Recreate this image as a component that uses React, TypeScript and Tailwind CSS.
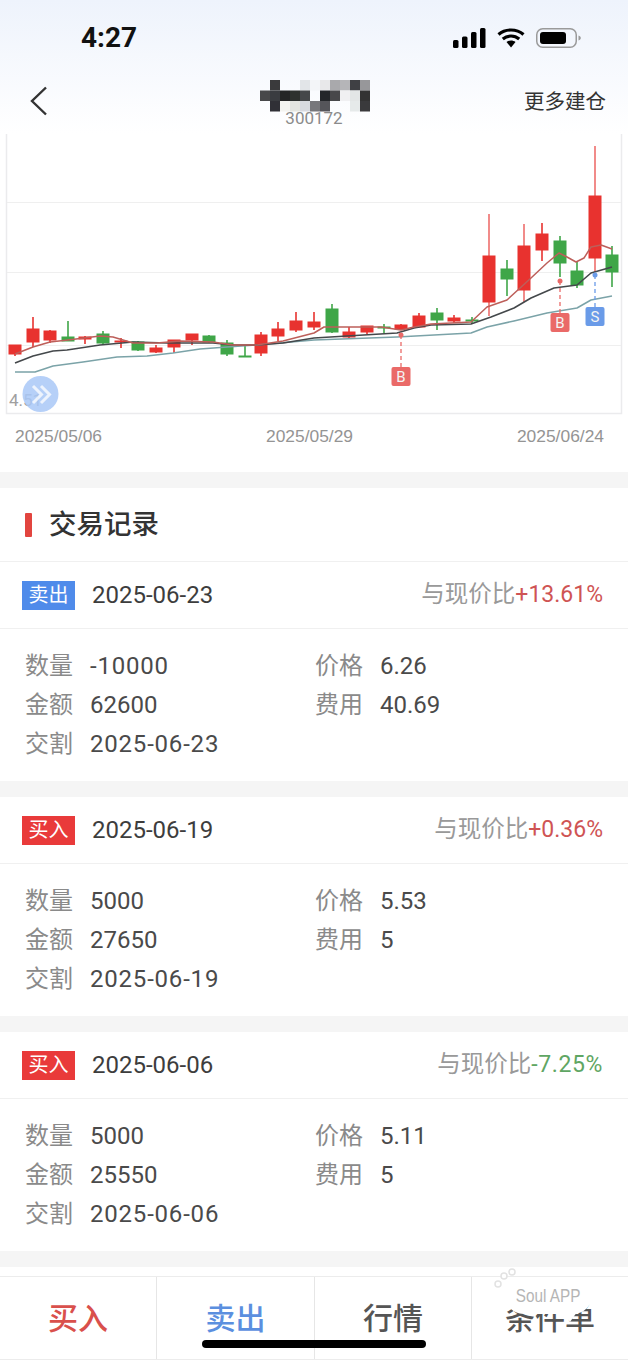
const RED = "#e8322f";
const GREEN = "#3fa648";

// x, body top, body bottom, wick top, wick bottom
const candles: [string, number, number, number, number, number][] = [
  ["r", 15, 345, 354, 345, 356],
  ["r", 33, 329, 342, 317, 347],
  ["r", 50, 331, 340, 330, 343],
  ["g", 68, 337, 341, 321, 341],
  ["r", 85, 337, 339, 336, 344],
  ["g", 103, 334, 343, 331, 345],
  ["r", 121, 341, 342, 338, 348],
  ["g", 138, 342, 350, 341, 351],
  ["r", 156, 348, 352, 345, 353],
  ["r", 174, 340, 347, 340, 353],
  ["r", 192, 334, 340, 334, 345],
  ["g", 209, 336, 342, 335, 343],
  ["g", 227, 343, 354, 340, 356],
  ["g", 245, 356, 357, 346, 357],
  ["r", 261, 335, 353, 332, 356],
  ["r", 278, 329, 336, 322, 341],
  ["r", 296, 321, 330, 312, 332],
  ["r", 314, 322, 327, 312, 330],
  ["g", 332, 309, 332, 304, 333],
  ["r", 349, 332, 337, 327, 338],
  ["r", 367, 326, 332, 326, 334],
  ["g", 384, 327, 328, 324, 333],
  ["r", 401, 325, 329, 324, 330],
  ["r", 419, 316, 327, 313, 327],
  ["g", 437, 313, 320, 308, 330],
  ["r", 454, 318, 321, 315, 323],
  ["g", 472, 320, 321, 317, 324],
  ["r", 489, 256, 302, 214, 316],
  ["g", 507, 269, 279, 260, 296],
  ["r", 524, 246, 290, 224, 302],
  ["r", 542, 234, 250, 223, 261],
  ["g", 560, 241, 263, 236, 277],
  ["g", 577, 271, 285, 262, 288],
  ["r", 595, 196, 258, 146, 272],
  ["g", 612, 255, 272, 246, 287],
];

const maRed = "15,354 33,347 50,342 68,340 100,336 113,337 133,343 157,343 180,341 213,342 233,345 257,345 283,341 314,333 324,327 357,327 381,327 401,330 414,327 431,324 471,322 487,307 507,300 531,278 547,263 559,253 567,257 576,262 584,258 591,247 601,245 612,249";
const maBlack = "15,363 33,356 53,351 67,350 100,345 133,342 167,343 213,343 233,345 257,345 283,343 314,338 347,336 397,333 414,328 431,325 471,324 491,317 514,308 531,298 554,288 577,285 591,273 612,267";
const maTeal = "15,372 35,372 53,366 83,362 117,357 147,356 173,353 200,349 227,347 257,345 314,340 397,337 471,333 487,327 514,321 547,313 577,308 591,300 612,296";

function TradeMark({ x, y1, y2, label, color }: { x: number; y1: number; y2: number; label: string; color: string }) {
  return (
    <g>
      <circle cx={x} cy={y1} r="2.5" fill={color} />
      <line x1={x} x2={x} y1={y1} y2={y2} stroke={color} strokeWidth="1.3" strokeDasharray="4 3" />
      <rect x={x - 9.5} y={y2} width="19" height="19" rx="2" fill={color} />
      <text x={x} y={y2 + 15} textAnchor="middle" fontSize="15" fill="#f4f4f4" fontFamily="Roboto, sans-serif">
        {label}
      </text>
    </g>
  );
}

function KChart() {
  return (
    <svg width="628" height="285" viewBox="0 133 628 285" className="block">
      <path d="M6.5 134V413.5H621.5V134" fill="none" stroke="#ebebed" strokeWidth="1.5" />
      <path d="M7 202.5H621M7 272.5H621M7 345.5H621" stroke="#efefef" strokeWidth="1" />
      {candles.map(([c, x, top, bottom, wickTop, wickBottom]) => (
        <g key={x} fill={c === "r" ? RED : GREEN} stroke={c === "r" ? RED : GREEN}>
          <line x1={x} x2={x} y1={wickTop} y2={wickBottom} strokeWidth="1.6" opacity={x === 595 || x === 489 || x === 524 ? 0.7 : 1} />
          <rect x={x - 6} y={top} width="12" height={bottom - top} strokeWidth="1" />
        </g>
      ))}
      <polyline points={maTeal} fill="none" stroke="#7ba3a8" strokeWidth="1.5" strokeLinejoin="round" />
      <polyline points={maBlack} fill="none" stroke="#44484b" strokeWidth="1.6" strokeLinejoin="round" />
      <polyline points={maRed} fill="none" stroke="#bd5f5a" strokeWidth="1.5" strokeLinejoin="round" />
      <TradeMark x={401} y1={335} y2={367} label="B" color="#ea6a68" />
      <TradeMark x={560} y1={281} y2={313} label="B" color="#ea6a68" />
      <TradeMark x={595} y1={275} y2={307} label="S" color="#6a9be8" />
      <text x="9" y="406" fontSize="17" fill="#a0a0a0" fontFamily="Roboto, sans-serif">4.51</text>
      <circle cx="40.5" cy="394" r="18" fill="#a9c8f7" fillOpacity="0.85" />
      <path d="M33 386L41.5 394.5L33 403M41 386L49.5 394.5L41 403" fill="none" stroke="#ffffff" strokeWidth="3" opacity="0.75" />
    </svg>
  );
}

function StatusIcons() {
  return (
    <div className="flex items-center">
      <svg width="33" height="20" viewBox="0 0 33 20">
        <rect x="0" y="12" width="5.5" height="8" rx="1.5" fill="#000" />
        <rect x="9" y="8.5" width="5.5" height="11.5" rx="1.5" fill="#000" />
        <rect x="18" y="4" width="5.5" height="16" rx="1.5" fill="#000" />
        <rect x="27" y="0" width="5.5" height="20" rx="1.5" fill="#000" />
      </svg>
      <svg width="28" height="20" viewBox="0 0 28 20" className="ml-[11px]">
        <path d="M1.5 6.5C8.5 0.5 19.5 0.5 26.5 6.5M5.8 11C10.5 7 17.5 7 22.2 11" fill="none" stroke="#000" strokeWidth="3.2" />
        <path d="M9.5 14C12 12 16 12 18.5 14L14 19.5Z" fill="#000" />
      </svg>
      <svg width="45" height="20" viewBox="0 0 45 20" className="ml-[11px]">
        <rect x="0.75" y="0.75" width="39.5" height="18.5" rx="6" fill="none" stroke="#9a9a9a" strokeWidth="1.5" />
        <rect x="4" y="4" width="26" height="12" rx="3" fill="#000" />
        <path d="M42.5 7.5V12.5C44 12 44.8 11 44.8 10S44 8 42.5 7.5Z" fill="#9a9a9a" />
      </svg>
    </div>
  );
}

// pixelated title
const mosaic: [number, number, string][] = [
  [270, 80, "#3a3a3c"], [300, 80, "#e2e5e8"], [310, 80, "#f3f5f8"], [320, 80, "#e8e8ea"], [330, 80, "#a9a9ac"], [340, 80, "#b5b5b8"], [350, 80, "#3f4044"], [360, 80, "#97979a"],
  [260, 90.5, "#48484a"], [270, 90.5, "#3a3c40"], [280, 90.5, "#252525"], [290, 90.5, "#2e322e"], [300, 90.5, "#45474a"], [320, 90.5, "#24262a"], [330, 90.5, "#48484a"], [340, 90.5, "#f0f0f2"], [350, 90.5, "#e3e6e6"], [360, 90.5, "#333333"],
  [270, 101, "#303036"], [280, 101, "#f4f4f0"], [290, 101, "#e4e6e0"], [300, 101, "#d8dae0"], [310, 101, "#77777b"], [320, 101, "#55555a"], [350, 101, "#e6eaea"], [360, 101, "#3a3a3c"],
];

const trades = [
  { side: "卖出", date: "2025-06-23", diff: "+13.61%", qty: "-10000", price: "6.26", amount: "62600", fee: "40.69" },
  { side: "买入", date: "2025-06-19", diff: "+0.36%", qty: "5000", price: "5.53", amount: "27650", fee: "5" },
  { side: "买入", date: "2025-06-06", diff: "-7.25%", qty: "5000", price: "5.11", amount: "25550", fee: "5" },
];

function Field({ label, value }: { label: string; value: string }) {
  return (
    <div className="flex h-[39px] items-center">
      <span className="w-[65px] text-[#8a8a8a]">{label}</span>
      <span className={value.includes("-") ? "tracking-[0.8px] text-[#4a4a4a]" : "text-[#4a4a4a]"}>{value}</span>
    </div>
  );
}

function TradeCard({ side, date, diff, qty, price, amount, fee }: (typeof trades)[number]) {
  const isSell = side === "卖出";
  return (
    <section>
      <div className="flex h-[67px] items-center justify-between border-b border-[#f0f0f0] pl-[22px] pr-[25px]">
        <div className="flex items-center">
          <span className={`flex h-[29px] w-[53px] items-center justify-center text-[20px] text-white ${isSell ? "bg-[#4f8bea]" : "bg-[#e93a3a]"}`}>
            {side}
          </span>
          <span className="ml-[17px] text-[24px] text-[#3d3d3d]">{date}</span>
        </div>
        <div className="text-[23.5px] text-[#999999]">
          与现价比
          <span className={diff.startsWith("-") ? "text-[23px] tracking-[0.6px] text-[#5fa663]" : "text-[23px] text-[#cf5454]"}>{diff}</span>
        </div>
      </div>
      <div className="grid h-[152px] grid-cols-[290px_1fr] content-start pl-[25px] pt-[17px] text-[24px]">
        <Field label="数量" value={qty} />
        <Field label="价格" value={price} />
        <Field label="金额" value={amount} />
        <Field label="费用" value={fee} />
        <Field label="交割" value={date} />
      </div>
    </section>
  );
}

export default function App() {
  return (
    <div
      className="relative flex h-[1360px] w-[628px] flex-col overflow-hidden bg-white"
      style={{ fontFamily: 'Roboto, "Noto Sans CJK SC", sans-serif' }}
    >
      <header className="h-[133px] bg-gradient-to-b from-[#eef3fc] to-white">
        <div className="flex h-[76px] items-center justify-between pl-[81px] pr-[47px]">
          <span className="text-[28px] font-bold text-[#111]">4:27</span>
          <StatusIcons />
        </div>
        <div className="relative flex h-[50px] items-center justify-between pl-[30px] pr-[22px]">
          <svg width="18" height="30" viewBox="0 0 18 30">
            <path d="M16 1.5L2 15L16 28.5" fill="none" stroke="#333" strokeWidth="2.4" />
          </svg>
          <span className="pt-[2px] text-[20.5px] text-[#333]">更多建仓</span>
        </div>
        <p className="-mt-[18px] text-center text-[17px] leading-[20px] text-[#8b8b8b]">300172</p>
      </header>

      {/* mosaic over the stock name */}
      <svg width="628" height="32" viewBox="0 80 628 32" className="absolute left-0 top-[80px]">
        {mosaic.map(([x, y, fill]) => (
          <rect key={`${x}-${y}`} x={x} y={y} width="10" height="10.5" fill={fill} />
        ))}
      </svg>

      <KChart />
      <div className="flex h-[54px] justify-between pl-[15px] pr-[24px] pt-[6px] text-[17.4px] leading-[24px] text-[#949494]" style={{ fontFamily: '"Liberation Sans", sans-serif' }}>
        <span>2025/05/06</span>
        <span>2025/05/29</span>
        <span>2025/06/24</span>
      </div>

      <div className="h-[16px] bg-[#f5f5f5]" />
      <div className="flex h-[74px] items-center border-b border-[#f0f0f0] pl-[25px]">
        <span className="h-[24px] w-[7px] rounded-[1px] bg-[#e2453f]" />
        <span className="ml-[17px] text-[27.5px] font-medium text-[#333]">交易记录</span>
      </div>

      <div>
        {trades.map((t) => (
          <div key={t.date}>
            <TradeCard {...t} />
            <div className="h-[16px] bg-[#f5f5f5]" />
          </div>
        ))}
      </div>

      <div className="mt-auto grid h-[84px] grid-cols-[156px_158px_157px_157px] border-y border-[#ececec] text-[30px] font-medium leading-none">
        <div className="flex items-center justify-center pt-[2px] text-[#d9504c]">买入</div>
        <div className="flex items-center justify-center border-l border-[#e6e6e6] pt-[2px] text-[#5b8fdf]">卖出</div>
        <div className="flex items-center justify-center border-l border-[#e6e6e6] pt-[2px] text-[#555]">行情</div>
        <div className="flex items-center justify-center border-l border-[#e6e6e6] pt-[2px] text-[#555]">条件单</div>
      </div>

      <div className="absolute left-[202px] top-[1340px] h-[8px] w-[224px] rounded-full bg-black" />

      {/* watermark */}
      <div className="absolute left-[505px] top-[1277px] flex h-[37px] w-[87px] items-center justify-center rounded-full bg-white text-[18px] leading-none text-[#b5b5b5]" style={{ fontFamily: '"Liberation Sans", sans-serif' }}>
        <span className="inline-block scale-x-85 whitespace-nowrap">Soul APP</span>
      </div>
      <svg width="14" height="10" viewBox="0 0 14 10" className="absolute left-[563px] top-[1312px]">
        <path d="M0 0H14L7 10Z" fill="#ffffff" />
      </svg>
      <svg width="24" height="22" viewBox="0 0 24 22" className="absolute left-[494px] top-[1267px]">
        <circle cx="4" cy="17" r="3" fill="#ffffff" stroke="#e2e2e2" strokeWidth="1.5" />
        <circle cx="10" cy="9" r="3" fill="#ffffff" stroke="#e2e2e2" strokeWidth="1.5" />
        <circle cx="18" cy="5" r="3" fill="#ffffff" stroke="#e2e2e2" strokeWidth="1.5" />
      </svg>
    </div>
  );
}
